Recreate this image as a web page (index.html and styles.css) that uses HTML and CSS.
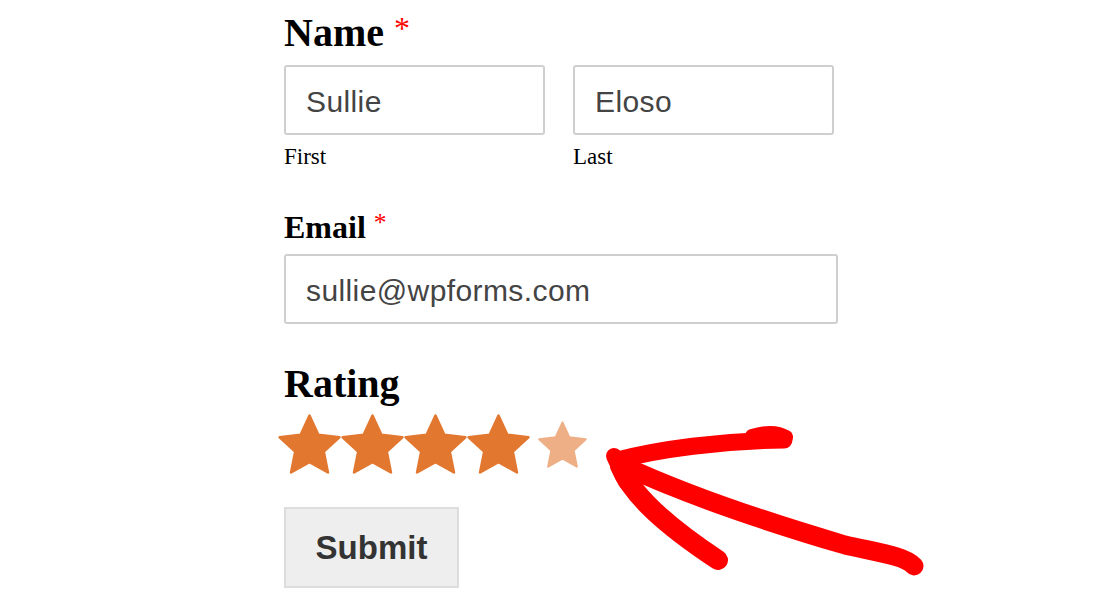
FILE: index.html
```html
<!DOCTYPE html>
<html lang="en">
<head>
    <meta charset="UTF-8">
    <title>Rating Form</title>
    <link rel="stylesheet" href="styles.css">
</head>
<body>
    <svg width="0" height="0" class="defs">
        <symbol id="star" viewBox="0 -2.5 100 95.5">
            <path d="M50 0 L64.11 30.58 L97.55 34.55 L72.83 57.42 L79.39 90.45 L50 74 L20.61 90.45 L27.17 57.42 L2.45 34.55 L35.89 30.58 Z"/>
        </symbol>
    </svg>

    <form class="form">
        <div class="field">
            <label class="field-label label-lg">Name <span class="required">*</span></label>
            <div class="name-row">
                <div class="name-col">
                    <input class="input" type="text" value="Sullie">
                    <span class="sublabel">First</span>
                </div>
                <div class="name-col">
                    <input class="input" type="text" value="Eloso">
                    <span class="sublabel">Last</span>
                </div>
            </div>
        </div>

        <div class="field field-email">
            <label class="field-label label-sm">Email <span class="required">*</span></label>
            <input class="input input-wide" type="email" value="sullie@wpforms.com">
        </div>

        <div class="field field-rating">
            <label class="field-label label-lg">Rating</label>
            <div class="stars">
                <svg class="star"><use href="#star"/></svg>
                <svg class="star"><use href="#star"/></svg>
                <svg class="star"><use href="#star"/></svg>
                <svg class="star"><use href="#star"/></svg>
                <svg class="star star-hover"><use href="#star"/></svg>
            </div>
        </div>

        <button class="submit" type="button">Submit</button>
    </form>

    <!-- hand drawn annotation arrow -->
    <svg class="arrow" width="1116" height="608" viewBox="0 0 1116 608">
        <g fill="none" stroke="#ff0000" stroke-linecap="round" stroke-linejoin="round">
            <path d="M622 465 C680 492, 760 520, 845 545 C880 553, 905 556, 914 566" stroke-width="19"/>
            <path d="M618 460 C660 449, 720 441, 784 440" stroke-width="17"/>
            <path d="M752 436 C765 432, 778 432, 786 437" stroke-width="14"/>
            <path d="M620 466 C632 495, 665 525, 718 560" stroke-width="20"/>
            <path d="M614 456 L626 482" stroke-width="16"/>
        </g>
    </svg>
</body>
</html>
```

FILE: styles.css
```css
body {
    margin: 0;
    background: #fff;
    font-family: 'Liberation Serif', serif;
    color: #000;
}

.defs {
    position: absolute;
}

.form {
    width: 554px;
    margin-left: 284px;
    padding-top: 9px;
    display: flex;
    flex-direction: column;
}

.field {
    display: flex;
    flex-direction: column;
}

.field-label {
    font-weight: bold;
    display: block;
}

.label-lg {
    font-size: 40px;
    line-height: 48px;
    margin-bottom: 8px;
}

.label-sm {
    font-size: 32px;
    line-height: 38px;
    margin-bottom: 8px;
}

.required {
    color: #ff0000;
    font-weight: normal;
    font-size: 0.8em;
    vertical-align: top;
    line-height: 1.2;
}

.name-row {
    display: grid;
    grid-template-columns: 261px 261px;
    gap: 28px;
}

.name-col {
    display: flex;
    flex-direction: column;
}

.input {
    box-sizing: border-box;
    width: 100%;
    height: 70px;
    margin: 0;
    padding: 4px 20px 0;
    border: 2px solid #cfcfcf;
    border-radius: 3px;
    font-family: 'Liberation Sans', Arial, sans-serif;
    font-size: 30px;
    letter-spacing: 0.4px;
    color: #444;
    background: #fff;
    outline: none;
}

.sublabel {
    font-size: 23px;
    line-height: 28px;
    margin-top: 8px;
}

.field-email {
    margin-top: 37px;
}

.field-rating {
    margin-top: 36px;
}

.field-rating .label-lg {
    margin-bottom: 1px;
}

.stars {
    display: flex;
    align-items: center;
    height: 70px;
    margin-left: -6px;
}

.star {
    width: 63px;
    height: 60px;
    fill: #e27730;
    stroke: #e27730;
    stroke-width: 4px;
    stroke-linejoin: round;
}

.star-hover {
    width: 49px;
    height: 47px;
    margin-left: 8px;
    opacity: 0.58;
}

.submit {
    align-self: flex-start;
    margin-top: 28px;
    width: 175px;
    height: 81px;
    padding: 0;
    background: #eee;
    border: 2px solid #ddd;
    font-family: 'Liberation Sans', Arial, sans-serif;
    font-weight: bold;
    font-size: 33px;
    color: #333;
}

.arrow {
    position: absolute;
    top: 0;
    left: 0;
    pointer-events: none;
}
```
